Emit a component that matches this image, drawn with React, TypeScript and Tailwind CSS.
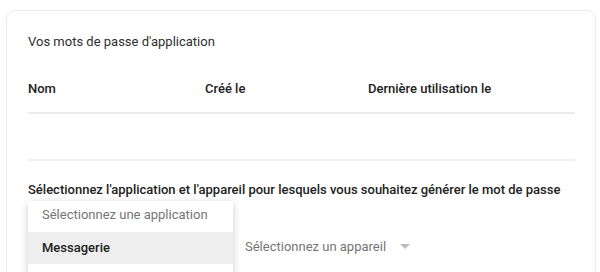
export default function App() {
  return (
    <div className="h-[272px] w-[600px] overflow-hidden bg-white pl-[6px] pt-[10px] font-['Roboto',sans-serif]">
      <div className="h-[300px] w-[590px] rounded-[9px] border-[1.5px] border-[#ebebeb] bg-white pl-[21px] pr-[20px]">
        <h2 className="pt-[22px] text-[13px] leading-[18px] text-[#2f2f2f]">Vos mots de passe d'application</h2>

        <div className="mt-[29px] flex h-[34px] items-start border-b-2 border-[#ececec] text-[13px] font-medium leading-[18px] text-[#222]">
          <div className="w-[177px]">Nom</div>
          <div className="w-[163px]">Créé le</div>
          <div>Dernière utilisation le</div>
        </div>

        <div className="h-[47px] border-b-2 border-[#f0f0f0]" />

        <p className="mt-[20px] text-[13px] font-medium leading-[18px] text-[#222]">
          Sélectionnez l'application et l'appareil pour lesquels vous souhaitez générer le mot de passe
        </p>

        <div className="relative mt-[2px] h-[80px]">
          <div className="absolute left-0 top-0 w-[205px] bg-white pt-[5px] shadow-[0_2px_8px_rgba(0,0,0,0.2)]">
            <div className="h-[26px] px-[14px] text-[13px] leading-[18px] text-[#757575]">Sélectionnez une application</div>
            <div className="flex h-[32px] items-center bg-[#eeeeee] px-[14px] text-[13px] font-medium text-[#222]">Messagerie</div>
            <div className="h-[32px]" />
          </div>
          <div className="absolute left-[217px] top-[37px] flex items-center gap-[14px] text-[13px] leading-[18px] text-[#757575]">
            <span>Sélectionnez un appareil</span>
            <svg width="10" height="6" viewBox="0 0 10 6">
              <path d="M0 0h10L5 5z" fill="#bdbdbd" />
            </svg>
          </div>
        </div>
      </div>
    </div>
  );
}
